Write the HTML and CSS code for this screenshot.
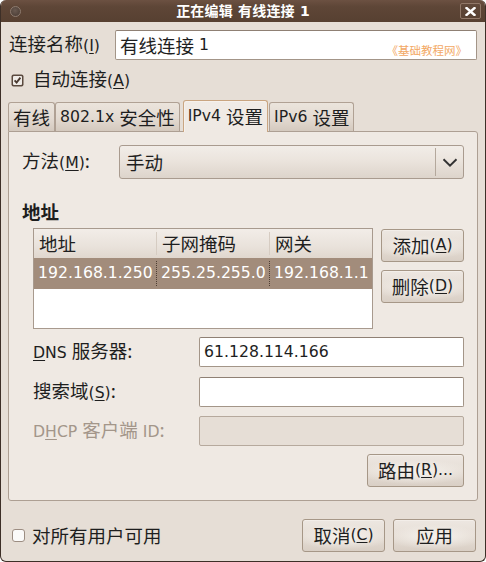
FILE: index.html
```html
<!DOCTYPE html>
<html lang="zh-CN">
<head>
<meta charset="utf-8">
<title>正在编辑 有线连接 1</title>
<link rel="stylesheet" href="styles.css">
</head>
<body>
<div class="window">
  <div class="titlebar">
    <span class="tb-dot"></span>
    <span class="tb-title">正在编辑 有线连接 1</span>
    <span class="tb-close">
      <svg width="11" height="9" viewBox="0 0 11 9"><path d="M1.5 1 L9.5 8 M9.5 1 L1.5 8" stroke="#fff" stroke-width="2.4" stroke-linecap="square" fill="none"/></svg>
    </span>
  </div>
  <div class="content">
    <div class="name-row">
      <span class="name-lbl"><span class="z">连接名称</span>(<u>I</u>)</span>
      <div class="entry name-entry"><span class="z">有线连接</span>&nbsp;1<span class="watermark">《基础教程网》</span></div>
    </div>
    <div class="check-row">
      <svg class="cb" width="13" height="13" viewBox="0 0 13 13"><rect x="0.5" y="0.5" width="12" height="12" rx="2" fill="#5b4a3f"/><rect x="2" y="2" width="9" height="9" rx="1" fill="#efebe7"/><path d="M3.6 6.4 L5.6 8.6 L9.4 3.6" stroke="#4a3a30" stroke-width="1.9" fill="none"/></svg>
      <span><span class="z">自动连接</span>(<u>A</u>)</span>
    </div>
    <div class="notebook">
      <div class="tabs">
        <div class="tab"><span class="z">有线</span></div>
        <div class="tab">802.1x&nbsp;<span class="z">安全性</span></div>
        <div class="tab active">IPv4&nbsp;<span class="z">设置</span></div>
        <div class="tab">IPv6&nbsp;<span class="z">设置</span></div>
      </div>
      <div class="page">
        <div class="method-row">
          <span class="method-lbl"><span class="z">方法</span>(<u>M</u>)<span class="z">:</span></span>
          <div class="combo">
            <span class="combo-text z">手动</span>
            <span class="combo-arrow">
              <svg width="16" height="9" viewBox="0 0 16 9"><path d="M1.5 1.2 L8 7.6 L14.5 1.2" stroke="#333" stroke-width="2" fill="none"/></svg>
            </span>
          </div>
        </div>
        <div class="heading z">地址</div>
        <div class="addr-block">
          <div class="table">
            <div class="thead">
              <div class="th z">地址</div>
              <div class="th z">子网掩码</div>
              <div class="th z">网关</div>
            </div>
            <div class="trow selected">
              <div class="td">192.168.1.250</div>
              <div class="td">255.25.255.0</div>
              <div class="td">192.168.1.1</div>
            </div>
          </div>
          <div class="addr-buttons">
            <div class="btn"><span class="z">添加</span>(<u>A</u>)</div>
            <div class="btn"><span class="z">删除</span>(<u>D</u>)</div>
          </div>
        </div>
        <div class="form-row first">
          <span class="form-lbl"><u>D</u>NS&nbsp;<span class="z">服务器:</span></span>
          <div class="entry">61.128.114.166</div>
        </div>
        <div class="form-row second">
          <span class="form-lbl"><span class="z">搜索域</span>(<u>S</u>)<span class="z">:</span></span>
          <div class="entry"></div>
        </div>
        <div class="form-row third">
          <span class="form-lbl disabled-lbl">D<u>H</u>CP&nbsp;<span class="z">客户端</span>&nbsp;ID<span class="z">:</span></span>
          <div class="entry disabled"></div>
        </div>
        <div class="route-row">
          <div class="btn route"><span class="z">路由</span>(<u>R</u>)...</div>
        </div>
      </div>
    </div>
    <div class="bottom-row">
      <div class="bottom-check">
        <svg class="cb" width="13" height="13" viewBox="0 0 13 13"><rect x="0.5" y="0.5" width="12" height="12" rx="2.5" fill="#fbfaf9" stroke="#9c8d82"/></svg>
        <span class="z">对所有用户可用</span>
      </div>
      <div class="spacer"></div>
      <div class="btn dlg"><span class="z">取消</span>(<u>C</u>)</div>
      <div class="btn dlg"><span class="z">应用</span></div>
    </div>
  </div>
</div>
</body>
</html>
```

FILE: styles.css
```css
* { box-sizing: border-box; }
html, body { margin: 0; padding: 0; background: #ffffff; }
body {
  font-family: "DejaVu Sans", "Noto Sans CJK SC", sans-serif;
  font-size: 15.7px;
  color: #1e1e1e;
  line-height: 1.2;
}
.z {
  font-family: "Noto Sans CJK SC", sans-serif;
  font-size: 18.5px;
  line-height: 1;
}
u { text-decoration: underline; text-underline-offset: 2px; text-decoration-thickness: 1px; }

.window {
  width: 486px;
  height: 562px;
  display: flex;
  flex-direction: column;
  background: #e6ded6;
  border: 1px solid #3d2f27;
  border-top: 0;
  border-radius: 6px;
  overflow: hidden;
}

.titlebar {
  flex: none;
  height: 22px;
  display: grid;
  grid-template-columns: 1fr auto 1fr;
  align-items: center;
  background: linear-gradient(#6c5142 0%, #5e4637 30%, #574031 100%);
  color: #fff;
}
.tb-dot {
  justify-self: start;
  margin-left: 9px;
  width: 11px;
  height: 11px;
  border-radius: 50%;
  border: 1px solid #8d7b6f;
  background: radial-gradient(circle at 45% 40%, #6a5a51, #463830);
}
.tb-title {
  font-weight: bold;
  font-size: 14px;
  line-height: 22px;
  letter-spacing: 0.2px;
}
.tb-close {
  justify-self: end;
  margin-right: 4px;
  width: 21px;
  height: 16px;
  border: 1px solid #917868;
  border-radius: 2px;
  display: flex;
  align-items: center;
  justify-content: center;
}

.content {
  flex: 1;
  display: flex;
  flex-direction: column;
  padding: 8px 7px 0 7px;
}

.name-row {
  display: flex;
  align-items: center;
  height: 30px;
}
.name-lbl { width: 107px; padding-left: 1px; white-space: nowrap; }

.entry {
  height: 30px;
  flex: 1;
  display: flex;
  align-items: center;
  padding-left: 4px;
  background: #ffffff;
  border: 1px solid #a39588;
  border-top-color: #8f8074;
  border-radius: 2px;
  position: relative;
  white-space: nowrap;
}
.name-entry { margin-right: 1px; }
.entry.disabled {
  background: #e6ded6;
  border-color: #b6a99d;
}
.watermark {
  position: absolute;
  right: 9px;
  bottom: 2px;
  font-family: "Noto Sans CJK SC", sans-serif;
  font-size: 11.5px;
  line-height: 14px;
  color: #f3a864;
}

.check-row {
  margin-top: 10px;
  height: 20px;
  display: flex;
  align-items: center;
  gap: 9px;
  padding-left: 3px;
}
.cb { flex: none; display: block; }

.notebook { margin-top: 10px; }
.tabs {
  display: flex;
  align-items: flex-end;
  height: 31px;
}
.tab {
  height: 29px;
  padding: 0 4px;
  display: flex;
  align-items: center;
  white-space: nowrap;
  border: 1px solid #b0a194;
  border-bottom: 0;
  border-radius: 3px 3px 0 0;
  background: linear-gradient(#ebe4dc 0%, #e3dad1 55%, #d4c9be 100%);
}
.tab.active {
  height: 32px;
  margin: 0 1px -1px 3px;
  background: linear-gradient(#f0ebe6, #efe9e3);
  border-color: #c9a581;
  box-shadow: inset 1px 1px 0 #f6f1ec;
  position: relative;
  z-index: 1;
}
.page {
  height: 370px;
  padding: 13px;
  background: #efe9e3;
  border: 1px solid #ad9f93;
  border-radius: 0 3px 3px 3px;
}

.method-row {
  display: flex;
  align-items: center;
  height: 34px;
}
.method-lbl { width: 97px; white-space: nowrap; }
.combo {
  flex: 1;
  height: 34px;
  display: flex;
  align-items: center;
  border: 1px solid #a99b8f;
  border-radius: 3px;
  background: linear-gradient(#f2ede8 0%, #ebe4dd 45%, #ddd4cb 100%);
}
.combo-text { flex: 1; padding-left: 6px; }
.combo-arrow {
  width: 28px;
  height: 28px;
  border-left: 1px solid #b4a89c;
  display: flex;
  align-items: center;
  justify-content: center;
}

.heading {
  margin-top: 21px;
  height: 22px;
  line-height: 22px;
  font-weight: bold;
}

.addr-block {
  margin-top: 6px;
  display: flex;
  gap: 8px;
  padding-left: 11px;
}
.table {
  width: 340px;
  height: 101px;
  background: #ffffff;
  border: 1px solid #a89a8e;
}
.thead, .trow {
  display: grid;
  grid-template-columns: 122px 113px 1fr;
}
.thead {
  height: 29px;
  background: linear-gradient(#f2ede8, #e9e2db 60%, #e0d7ce);
}
.th {
  display: flex;
  align-items: center;
  padding-left: 5px;
  border-left: 1px solid #d6ccc2;
  margin: 3px 0;
}
.th:first-child { border-left: 0; }
.trow { height: 31px; }
.trow.selected { background: #a28c7b; color: #ffffff; }
.td {
  display: flex;
  align-items: center;
  padding-left: 4px;
  border-left: 1px dotted #4e3e33;
  margin: 3px 0;
  white-space: nowrap;
  overflow: hidden;
}
.td:first-child { border-left: 0; }

.addr-buttons {
  margin-top: 1px;
  display: flex;
  flex-direction: column;
  gap: 8px;
  width: 83px;
}
.btn {
  height: 33px;
  display: flex;
  align-items: center;
  justify-content: center;
  white-space: nowrap;
  border: 1px solid #a69787;
  border-radius: 3px;
  background:
    radial-gradient(ellipse 60% 40% at 50% 55%, rgba(248,245,241,0.9), rgba(248,245,241,0) 100%),
    linear-gradient(#ede7e1 0%, #e6ded6 50%, #d9cfc5 100%);
  box-shadow: inset 0 1px 0 #f3eee9;
}

.form-row {
  display: flex;
  align-items: center;
  height: 30px;
  padding-left: 11px;
}
.form-row.first { margin-top: 8px; }
.form-row.second { margin-top: 10px; }
.form-row.third { margin-top: 9px; }
.form-lbl { width: 166px; white-space: nowrap; }
.disabled-lbl { color: #a3968a; }

.route-row {
  margin-top: 8px;
  display: flex;
  justify-content: flex-end;
}
.btn.route { width: 97px; }

.bottom-row {
  margin-top: 18px;
  height: 33px;
  display: flex;
  align-items: center;
  gap: 8px;
  padding-left: 4px;
  padding-right: 2px;
}
.bottom-check {
  display: flex;
  align-items: center;
  gap: 7px;
}
.spacer { flex: 1; }
.btn.dlg { width: 83px; }
```
